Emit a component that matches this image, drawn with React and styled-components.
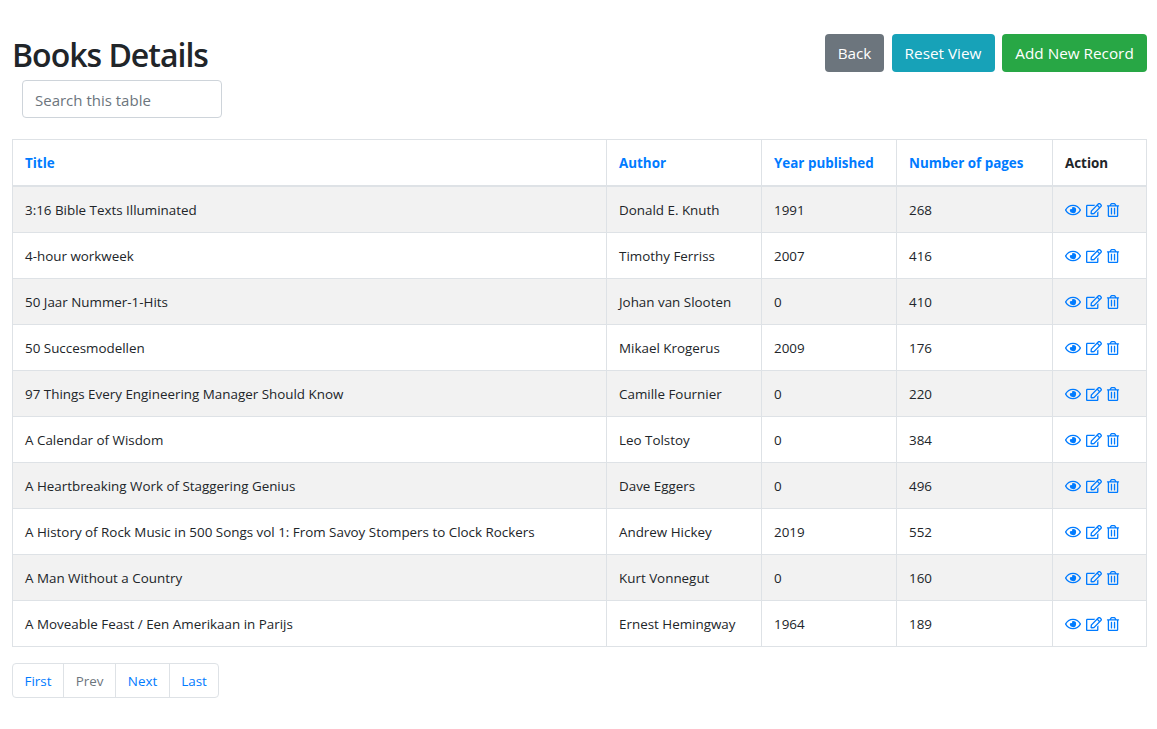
import React from "react";
import styled, { createGlobalStyle } from "styled-components";
import { FaRegEye, FaRegEdit, FaRegTrashAlt } from "react-icons/fa";

const Global = createGlobalStyle`
  html, body { margin: 0; padding: 0; background: #fff; }
  body { font-family: "Open Sans", "Noto Sans", sans-serif; color: #212529; }
  * { box-sizing: border-box; }
`;

const Page = styled.div`
  width: 1157px;
  height: 729px;
  padding: 34px 10px 0 12px;
  overflow: hidden;
`;
const Header = styled.div`
  display: flex;
  justify-content: space-between;
  align-items: flex-start;
`;
const Title = styled.h2`
  margin: 3px 0 0;
  font-size: 32px;
  line-height: 35px;
  font-weight: 600;
  letter-spacing: -1px;
`;
const Actions = styled.div`
  display: flex;
  gap: 7.5px;
`;
const Button = styled.button`
  height: 38px;
  padding: 0;
  width: ${(p) => p.$w}px;
  border: none;
  border-radius: 4px;
  background: ${(p) => p.$bg};
  color: #fff;
  font: inherit;
  font-size: 15.3px;
  white-space: nowrap;
`;
const Search = styled.input`
  display: block;
  width: 200px;
  height: 38px;
  margin: 8px 0 21px 10px;
  padding: 1px 12px 0;
  border: 1px solid #ced4da;
  border-radius: 4px;
  font: inherit;
  font-size: 15px;
  &::placeholder { color: #6c757d; opacity: 1; }
`;
const Table = styled.table`
  width: 1134px;
  table-layout: fixed;
  border-collapse: collapse;
  font-size: 13.4px;
`;
const Head = styled.th`
  height: 46px;
  padding: 1px 12px 0;
  border: 1px solid #dee2e6;
  border-bottom-width: 2px;
  text-align: left;
  font-weight: 700;
  color: ${(p) => (p.$plain ? "#212529" : "#007bff")};
`;
const Row = styled.tr`
  background: ${(p) => (p.$odd ? "#f2f2f2" : "#fff")};
  &:first-child td { height: 47px; padding-top: 1px; }
`;
const Cell = styled.td`
  height: 46px;
  padding: 0 12px;
  border: 1px solid #dee2e6;
  white-space: nowrap;
`;
const Icons = styled.span`
  display: flex;
  align-items: center;
  gap: 5px;
  color: #007bff;
  svg { display: block; }
  svg:last-child { margin-left: -1px; }
`;
const Pager = styled.nav`
  display: inline-flex;
  margin-top: 16px;
  height: 35px;
  border: 1px solid #dee2e6;
  border-radius: 4px;
  font-size: 13.4px;
`;
const PageLink = styled.span`
  display: flex;
  align-items: center;
  justify-content: center;
  width: ${(p) => p.$w}px;
  color: ${(p) => (p.$muted ? "#6c757d" : "#007bff")};
  & + & { border-left: 1px solid #dee2e6; }
`;

const columns = [
  { label: "Title", w: 594 },
  { label: "Author", w: 155 },
  { label: "Year published", w: 135 },
  { label: "Number of pages", w: 156 },
  { label: "Action", w: 94, plain: true },
];

const books = [
  ["3:16 Bible Texts Illuminated", "Donald E. Knuth", "1991", "268"],
  ["4-hour workweek", "Timothy Ferriss", "2007", "416"],
  ["50 Jaar Nummer-1-Hits", "Johan van Slooten", "0", "410"],
  ["50 Succesmodellen", "Mikael Krogerus", "2009", "176"],
  ["97 Things Every Engineering Manager Should Know", "Camille Fournier", "0", "220"],
  ["A Calendar of Wisdom", "Leo Tolstoy", "0", "384"],
  ["A Heartbreaking Work of Staggering Genius", "Dave Eggers", "0", "496"],
  ["A History of Rock Music in 500 Songs vol 1: From Savoy Stompers to Clock Rockers", "Andrew Hickey", "2019", "552"],
  ["A Man Without a Country", "Kurt Vonnegut", "0", "160"],
  ["A Moveable Feast / Een Amerikaan in Parijs", "Ernest Hemingway", "1964", "189"],
];

export default function App() {
  return (
    <Page>
      <Global />
      <Header>
        <Title>Books Details</Title>
        <Actions>
          <Button $bg="#6c757d" $w={59}>Back</Button>
          <Button $bg="#17a2b8" $w={103}>Reset View</Button>
          <Button $bg="#28a745" $w={145}>Add New Record</Button>
        </Actions>
      </Header>
      <Search placeholder="Search this table" />
      <Table>
        <colgroup>
          {columns.map((c) => <col key={c.label} style={{ width: c.w }} />)}
        </colgroup>
        <thead>
          <tr>
            {columns.map((c) => <Head key={c.label} $plain={c.plain}>{c.label}</Head>)}
          </tr>
        </thead>
        <tbody>
          {books.map((b, i) => (
            <Row key={b[0]} $odd={i % 2 === 0}>
              {b.map((v, j) => <Cell key={j}>{v}</Cell>)}
              <Cell>
                <Icons>
                  <FaRegEye size={16} />
                  <FaRegEdit size={16} />
                  <FaRegTrashAlt size={14} />
                </Icons>
              </Cell>
            </Row>
          ))}
        </tbody>
      </Table>
      <Pager>
        <PageLink $w={50}>First</PageLink>
        <PageLink $w={52} $muted>Prev</PageLink>
        <PageLink $w={54}>Next</PageLink>
        <PageLink $w={49}>Last</PageLink>
      </Pager>
    </Page>
  );
}
